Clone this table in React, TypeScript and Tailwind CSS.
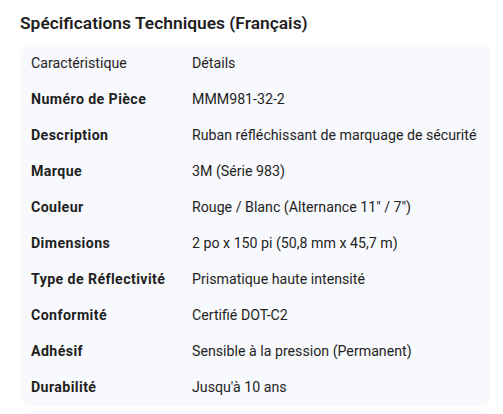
const ROWS = [
  ["Numéro de Pièce", "MMM981-32-2"],
  ["Description", "Ruban réfléchissant de marquage de sécurité"],
  ["Marque", "3M (Série 983)"],
  ["Couleur", "Rouge / Blanc (Alternance 11\" / 7\")"],
  ["Dimensions", "2 po x 150 pi (50,8 mm x 45,7 m)"],
  ["Type de Réflectivité", "Prismatique haute intensité"],
  ["Conformité", "Certifié DOT-C2"],
  ["Adhésif", "Sensible à la pression (Permanent)"],
  ["Durabilité", "Jusqu'à 10 ans"],
];

export default function App() {
  return (
    <div className="bg-white min-h-screen pl-[20px] pr-[12px] pt-[13px] text-[#1f1f1f] font-['Roboto',sans-serif] overflow-hidden h-[414px]">
      <h2 className="text-[17.4px] font-semibold leading-[20px] mb-[12px]">Spécifications Techniques (Français)</h2>

      <div className="bg-[#f8f9fc] rounded-xl pt-[1px]">
        <table className="w-full text-[14.2px] text-left whitespace-nowrap">
          <thead>
            <tr className="h-[36px]">
              <th className="font-normal pl-[11px] w-[172px]">Caractéristique</th>
              <th className="font-normal">Détails</th>
            </tr>
          </thead>
          <tbody>
            {ROWS.map(([k, v]) => (
              <tr key={k} className="h-[36px]">
                <td className="font-bold pl-[11px] tracking-[0.4px]">{k}</td>
                <td>{v}</td>
              </tr>
            ))}
          </tbody>
        </table>
      </div>

      <div className="bg-[#f8f9fc] rounded-xl h-[40px] mt-[5px]" />
    </div>
  );
}
